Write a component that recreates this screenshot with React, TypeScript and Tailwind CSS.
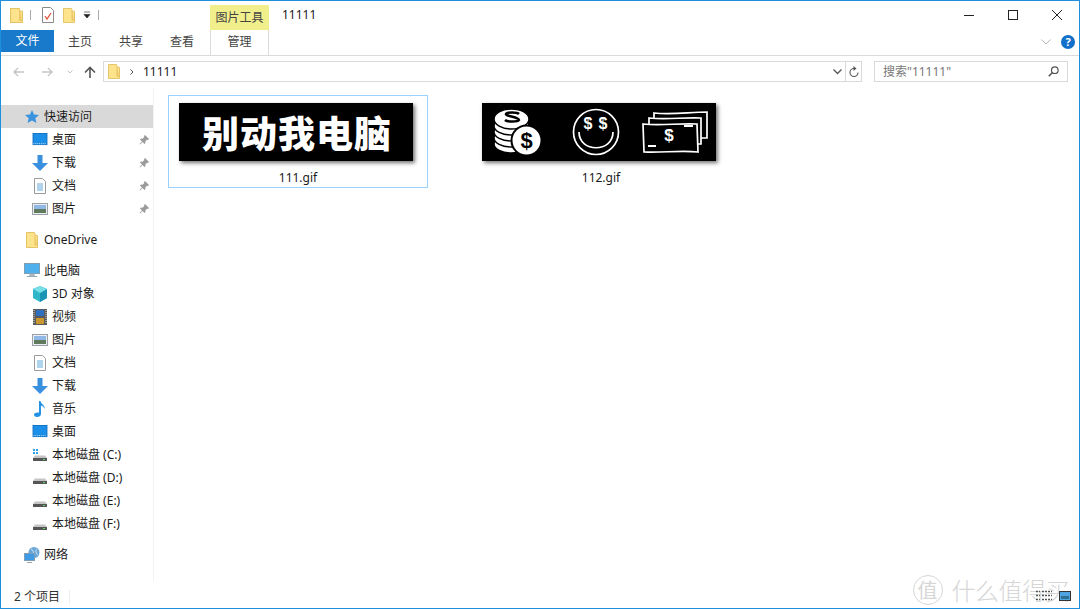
import type { ReactNode } from "react"

const Folder = ({ className = "" }: { className?: string }) => (
  <svg viewBox="0 0 12 16" preserveAspectRatio="none" className={className}>
    <path d="M.5.5h8l.5 1v2h2.500v12H.5z" fill="#fde38c" stroke="#e5c365" />
    <path d="M9 3.500V13h2.500" fill="#f4cf6c" stroke="#e5c365" />
  </svg>
)

const Desktop = () => (
  <svg viewBox="0 0 16 14" className="w-4 h-[13px]">
    <rect x="0.5" y="0.5" width="15" height="12" fill="#1b8ee8" stroke="#0f6fc0" />
    <path d="M1 11.5h14" stroke="#cfe8fb" strokeDasharray="1 1" />
  </svg>
)

const Download = () => (
  <svg viewBox="0 0 16 16" className="w-4 h-4">
    <path d="M5.5 0h5v8H16l-8 8-8-8h5.500z" fill="#3a8fdf" />
  </svg>
)

const Doc = () => (
  <svg viewBox="0 0 12 16" className="w-3 h-4">
    <path d="M.5.500h8l3 3v12H.5z" fill="#fff" stroke="#9a9a9a" />
    <path d="M3 6h6M3 8h6M3 10h6M3 12h6" stroke="#5fa8d8" />
  </svg>
)

const Pic = () => (
  <svg viewBox="0 0 16 12" className="w-4 h-3">
    <rect x="0.500" y="0.500" width="15" height="11" fill="#eceff1" stroke="#9aa0a5" />
    <rect x="2" y="2" width="12" height="4" fill="#8fb8e6" />
    <rect x="2" y="6" width="12" height="4" fill="#5f7a5c" />
  </svg>
)

const Cube = () => (
  <svg viewBox="0 0 16 16" className="w-4 h-4">
    <path d="M8 0l7 3v9l-7 4-7-4V3z" fill="#2fb6c8" />
    <path d="M8 7l7-4v9l-7 4z" fill="#1b93b5" />
    <path d="M8 0l7 3-7 4-7-4z" fill="#78dfe6" />
  </svg>
)

const Film = () => (
  <svg viewBox="0 0 14 16" className="w-[14px] h-4">
    <rect width="14" height="16" fill="#5a5a5a" />
    <rect x="3" y="1" width="8" height="6" fill="#2f6fc2" />
    <rect x="3" y="9" width="8" height="6" fill="#c9972f" />
    <path d="M1 1v14M13 1v14" stroke="#ddd" strokeDasharray="1 1" />
  </svg>
)

const Music = () => (
  <svg viewBox="0 0 12 16" className="w-3 h-4">
    <path d="M5 0h1.500c.3 3 5 4 4 8-.5-2-2-3.200-3.500-3.500V13c0 2-2 3-4 3S0 14.800 0 13.500 2 11 5 11.500z" fill="#2492e4" />
  </svg>
)

const Drive = ({ win = false }: { win?: boolean }) => (
  <svg viewBox="0 0 14 12" className="w-[14px] h-3">
    {win && (
      <g fill="#2aa3e8">
        <rect x="0" y="0" width="2" height="2" />
        <rect x="3" y="0" width="2" height="2" />
        <rect x="0" y="3" width="2" height="2" />
        <rect x="3" y="3" width="2" height="2" />
      </g>
    )}
    <path d="M2 6.500h10l2 2.500H0z" fill="#c4c4c4" />
    <rect x="0" y="9" width="14" height="3" fill="#555" />
    <rect x="10" y="10" width="2" height="1" fill="#5fd35f" />
  </svg>
)

const Pc = () => (
  <svg viewBox="0 0 16 15" className="w-4 h-[15px]">
    <rect x="0.500" y="0.500" width="15" height="10" fill="#4fb0ee" stroke="#7f9db5" />
    <path d="M6 11h4v2H6zM3 13.500h10" stroke="#9aa7b0" fill="#c5ced4" />
  </svg>
)

const Network = () => (
  <svg viewBox="0 0 16 16" className="w-4 h-4">
    <circle cx="10" cy="5.500" r="5.500" fill="#6aa6d6" />
    <path d="M7 2c2 1 3 3 2 5M13 2c-2 1-1 5 1 6" stroke="#cfe3f2" fill="none" />
    <rect x="0.500" y="6.500" width="10" height="7" fill="#3f9be6" stroke="#7f9db5" />
    <path d="M3 15.500h5" stroke="#9aa7b0" />
  </svg>
)

const Pin = () => (
  <svg viewBox="0 0 10 10" className="w-[10px] h-[10px]">
    <path d="M6 0l4 4-1 1-1-.3L6.300 6.500 6.500 8l-1 1-2-2L1 9.500.5 9 3 6.500l-2-2 1-1 1.500.2L5.300 2 5 1z" fill="#9b9b9b" />
  </svg>
)

const Row = ({ icon, label, pinned, sub, active }: { icon: ReactNode; label: string; pinned?: boolean; sub?: boolean; active?: boolean }) => (
  <div className={`h-[23px] flex items-center shrink-0 ${active ? "bg-[#d9d9d9]" : ""} ${sub ? "pl-[31px]" : "pl-[23px]"}`}>
    <span className="flex justify-center items-center shrink-0 w-4 mr-[4px]">{icon}</span>
    <span className="text-xs text-[#1a1a1a] flex-1 whitespace-nowrap">{label}</span>
    {pinned && <span className="mr-[4px] flex"><Pin /></span>}
  </div>
)

const CoinBanner = () => (
  <svg viewBox="0 0 234 58" className="w-[234px] h-[58px] block">
    <g fill="#fff" stroke="#000" strokeWidth="1.500">
      <ellipse cx="29.500" cy="41" rx="17.500" ry="9" />
      <ellipse cx="29.500" cy="35" rx="17.500" ry="9" />
      <ellipse cx="29.500" cy="29" rx="17.500" ry="9" />
      <ellipse cx="29.500" cy="23" rx="17.500" ry="9" />
      <ellipse cx="29.500" cy="16" rx="17.500" ry="10" />
      <circle cx="44.500" cy="37.500" r="15" strokeWidth="2" />
    </g>
    <path d="M37 11c-2-2-12-2-13 0-1 2 13 3 13 6-1 2-12 2-14 0" fill="none" stroke="#000" strokeWidth="2.500" />
    <text x="44.500" y="45" textAnchor="middle" fontSize="22" fontWeight="700" fill="#000" className="font-['Liberation_Sans',sans-serif]">$</text>
    <g fill="none" stroke="#fff" strokeWidth="1.700">
      <circle cx="114" cy="29" r="22.500" />
      <path d="M97 29c0 21 34 21 34 0" />
      <path d="M161 21c18 2 36-1 54 0l1 28c-18-2-36 1-54 0z" />
      <path d="M167 21v-6c18 2 36-1 52 0v26h-3" />
      <path d="M172 15v-5c18 2 36-1 53-1v26h-6" />
      <path d="M166 43h8M202 23h9" strokeWidth="2" />
    </g>
    <g fill="#fff" fontSize="16" fontWeight="700" textAnchor="middle" className="font-['Liberation_Sans',sans-serif]">
      <text x="106" y="26">$</text>
      <text x="121" y="26">$</text>
      <text x="187" y="38" fontSize="17">$</text>
    </g>
  </svg>
)

const FileItem = ({ name, selected, children }: { name: string; selected?: boolean; children: ReactNode }) => (
  <div className={`w-[260px] h-[93px] border flex flex-col items-center pt-[7px] ${selected ? "border-[#99d1ff]" : "border-transparent"}`}>
    <div className="w-[234px] h-[58px] self-start ml-[10px] bg-black shadow-[2px_2px_4px_rgba(0,0,0,0.55)] flex items-center justify-center overflow-hidden">
      {children}
    </div>
    <div className="text-xs text-[#1a1a1a] mt-[8px] leading-[18px]">{name}</div>
  </div>
)

const tabClass = "text-xs text-[#444] text-center"

export default function App() {
  return (
    <div className="relative w-[1080px] h-[609px] bg-white border border-[#1e8fdc] flex flex-col overflow-hidden font-['Noto_Sans','Noto_Sans_CJK_SC',sans-serif]">
      {/* title bar */}
      <div className="h-[29px] flex shrink-0">
        <div className="w-[209px] flex items-center pl-[9px] pb-[1px]">
          <Folder className="w-[13px] h-[15px]" />
          <span className="w-px h-[10px] bg-[#aaa] ml-[7px]" />
          <svg viewBox="0 0 12 16" className="w-3 h-4 ml-[11px]">
            <path d="M.5.500h8l3 3v12H.5z" fill="#fff" stroke="#8a8a8a" />
            <path d="M3 9l2 3 4-6" fill="none" stroke="#e0553a" strokeWidth="1.300" />
          </svg>
          <Folder className="w-3 h-[15px] ml-[9px]" />
          <svg viewBox="0 0 8 8" className="w-2 h-2 ml-[8px]">
            <path d="M1 1h6M1 3.500h6l-3 3.500z" fill="#222" stroke="#222" strokeWidth="0.600" />
          </svg>
          <span className="w-px h-[10px] bg-[#aaa] ml-[7px]" />
        </div>
        <div className="w-[59px] h-[25px] mt-[4px] bg-[#f1ee8c] text-xs text-[#444] flex items-center justify-center">图片工具</div>
        <div className="flex-1 pl-[13px] pt-[6px] text-xs text-[#1a1a1a]">11111</div>
        <div className="flex items-center pb-[1px] pr-[17px] gap-[34px]">
          <span className="w-[10px] h-px bg-[#222]" />
          <span className="w-[10px] h-[10px] border border-[#222]" />
          <svg viewBox="0 0 10 10" className="w-[10px] h-[10px]">
            <path d="M0 0l10 10M10 0L0 10" stroke="#222" />
          </svg>
        </div>
      </div>

      {/* ribbon */}
      <div className="h-[26px] flex border-b border-[#dadbdc] shrink-0 relative">
        <div className="w-[53px] h-[22px] bg-[#1979ca] text-white text-xs flex items-center justify-center">文件</div>
        <div className="w-[156px] flex pt-[4px] pl-[1px]">
          <div className={`${tabClass} w-[50px]`}>主页</div>
          <div className={`${tabClass} w-[52px]`}>共享</div>
          <div className={`${tabClass} w-[50px]`}>查看</div>
        </div>
        <div className={`${tabClass} w-[59px] border-x border-[#dadbdc] pt-[4px]`}>管理</div>
        <div className="flex-1 flex items-center justify-end pr-[4px] pb-[1px] gap-[10px]">
          <svg viewBox="0 0 10 6" className="w-[10px] h-[6px]">
            <path d="M.5.500L5 5 9.500.500" fill="none" stroke="#b5b5b5" />
          </svg>
          <span className="w-[14px] h-[14px] rounded-full bg-[#1270c9] text-white text-[11px] font-bold leading-[14px] text-center">?</span>
        </div>
      </div>

      {/* address row */}
      <div className="h-[32px] flex items-center shrink-0 pl-[12px] pr-[10px] pb-[1px]">
        <svg viewBox="0 0 12 10" className="w-3 h-[10px] text-[#c4c4c4]">
          <path d="M11 5H1M5 1L1 5l4 4" fill="none" stroke="currentColor" strokeWidth="1.300" />
        </svg>
        <svg viewBox="0 0 12 10" className="w-3 h-[10px] ml-[16px] text-[#c4c4c4]">
          <path d="M1 5h10M7 1l4 4-4 4" fill="none" stroke="currentColor" strokeWidth="1.300" />
        </svg>
        <svg viewBox="0 0 6 4" className="w-[6px] h-1 ml-[14px]">
          <path d="M.5.500L3 3 5.500.500" fill="none" stroke="#c4c4c4" />
        </svg>
        <svg viewBox="0 0 12 12" className="w-3 h-3 ml-[11px]">
          <path d="M6 12V1.500M1 6.500l5-5 5 5" fill="none" stroke="#555" strokeWidth="1.600" />
        </svg>
        <div className="w-[759px] h-[21px] ml-[7px] border border-[#d9d9d9] flex items-center">
          <Folder className="w-3 h-[15px] ml-[4px]" />
          <svg viewBox="0 0 4 6" className="w-1 h-[6px] ml-[10px]">
            <path d="M.5.500L3 3 .5 5.500" fill="none" stroke="#555" />
          </svg>
          <span className="text-xs text-[#1a1a1a] ml-[9px] flex-1">11111</span>
          <svg viewBox="0 0 9 6" className="w-[9px] h-[6px] mr-[3px]">
            <path d="M.5.500L4.500 4.500 8.500.500" fill="none" stroke="#555" strokeWidth="1.300" />
          </svg>
          <span className="w-[16px] h-full border-l border-[#d9d9d9] flex items-center justify-center">
            <svg viewBox="0 0 10 12" className="w-[10px] h-3">
              <path d="M5 2.500a4 4 0 1 0 4 4" fill="none" stroke="#555" strokeWidth="1.100" />
              <path d="M4.500 0l3 2.500-3 2.500z" fill="#555" />
            </svg>
          </span>
        </div>
        <div className="w-[194px] h-[21px] ml-[12px] border border-[#d9d9d9] flex items-center pl-[8px] pr-[8px] justify-between">
          <span className="text-xs text-[#777]">搜索"11111"</span>
          <svg viewBox="0 0 11 11" className="w-[11px] h-[11px]">
            <circle cx="6.800" cy="4.200" r="3.300" fill="none" stroke="#555" strokeWidth="1.200" />
            <path d="M4.500 6.500L.8 10.200" stroke="#555" strokeWidth="1.600" />
          </svg>
        </div>
      </div>

      {/* body */}
      <div className="flex-1 flex min-h-0">
        <div className="w-[153px] border-r border-[#f2f2f2] flex flex-col pt-[17px] shrink-0 mb-[5px]">
          <Row active label="快速访问" icon={
            <svg viewBox="0 0 14 13" className="w-[14px] h-[13px]">
              <path d="M7 0l2 4.500 5 .5-3.700 3.200L11.500 13 7 10.500 2.500 13l1.200-4.800L0 5l5-.5z" fill="#3b93e0" />
            </svg>
          } />
          <Row sub pinned label="桌面" icon={<Desktop />} />
          <Row sub pinned label="下载" icon={<Download />} />
          <Row sub pinned label="文档" icon={<Doc />} />
          <Row sub pinned label="图片" icon={<Pic />} />
          <div className="h-2 shrink-0" />
          <Row label="OneDrive" icon={<Folder className="w-3 h-4" />} />
          <div className="h-2 shrink-0" />
          <Row label="此电脑" icon={<Pc />} />
          <Row sub label="3D 对象" icon={<Cube />} />
          <Row sub label="视频" icon={<Film />} />
          <Row sub label="图片" icon={<Pic />} />
          <Row sub label="文档" icon={<Doc />} />
          <Row sub label="下载" icon={<Download />} />
          <Row sub label="音乐" icon={<Music />} />
          <Row sub label="桌面" icon={<Desktop />} />
          <Row sub label="本地磁盘 (C:)" icon={<Drive win />} />
          <Row sub label="本地磁盘 (D:)" icon={<Drive />} />
          <Row sub label="本地磁盘 (E:)" icon={<Drive />} />
          <Row sub label="本地磁盘 (F:)" icon={<Drive />} />
          <div className="h-2 shrink-0" />
          <Row label="网络" icon={<Network />} />
        </div>
        <div className="flex-1 flex gap-[43px] pl-[14px] pt-[7px] items-start">
          <FileItem name="111.gif" selected>
            <span className="text-white text-[37px] leading-none font-black tracking-[1px] pl-[2px] font-['Noto_Sans_CJK_SC',sans-serif]">别动我电脑</span>
          </FileItem>
          <FileItem name="112.gif">
            <CoinBanner />
          </FileItem>
        </div>
      </div>

      {/* status bar */}
      <div className="h-[22px] shrink-0 flex items-center pl-[13px] text-xs text-[#333] relative">
        <span className="leading-none">2 个项目</span>
        <span className="w-px h-[14px] bg-[#eee] ml-[9px]" />
      </div>

      {/* watermark over the window */}
      <div className="absolute right-[10px] bottom-[3px] flex items-center text-[#d6d6d6] pointer-events-none">
        <span className="w-[30px] h-[30px] rounded-full border border-[#d6d6d6] text-[20px] leading-[27px] text-center mr-[9px] font-['Noto_Sans_CJK_SC',sans-serif]">值</span>
        <span className="text-[24px] leading-none font-light tracking-[-0.5px] font-['Noto_Sans_CJK_SC',sans-serif]">什么值得买</span>
      </div>
      <div className="absolute right-[8px] bottom-[6px] flex items-center gap-[7px]">
        <svg viewBox="0 0 16 12" className="w-4 h-3">
          <path d="M0 1.500h4M6 1.500h10M0 5.500h4M6 5.500h10M0 9.500h4M6 9.500h10" stroke="#555" strokeWidth="1.500" strokeDasharray="2 1" />
        </svg>
        <svg viewBox="0 0 12 12" className="w-3 h-3">
          <rect x="0.500" y="1.500" width="11" height="9" fill="#4fa3e0" stroke="#333" />
          <rect x="2" y="6" width="8" height="3" fill="#2f6f8f" />
        </svg>
      </div>
    </div>
  )
}
